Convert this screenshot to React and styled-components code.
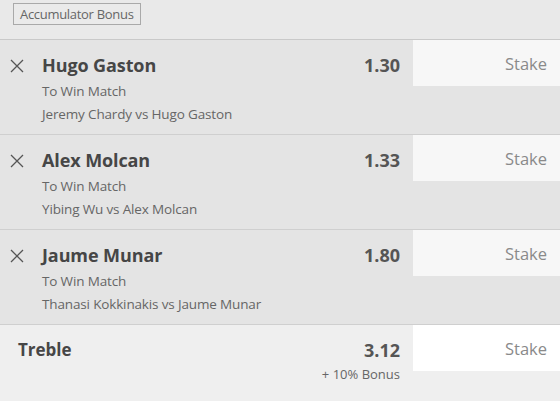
import styled, { createGlobalStyle } from 'styled-components';

const GlobalStyle = createGlobalStyle`
  body {
    margin: 0;
    background: #efefef;
    font-family: 'Open Sans', 'Noto Sans', sans-serif;
  }
`;

const Slip = styled.div`
  width: 560px;
  height: 401px;
  overflow: hidden;
  background: #efefef;
`;

const Header = styled.div`
  height: 40px;
  background: #e9e9e9;
  border-bottom: 1px solid #c9c9c9;
  padding: 3px 0 0 13px;
  box-sizing: border-box;
`;

const BonusTag = styled.button`
  display: block;
  height: 22px;
  padding: 0 6px;
  border: 1px solid #a9a9a9;
  background: #eaeaea;
  color: #666;
  font-family: inherit;
  font-size: 13px;
  letter-spacing: -0.3px;
  line-height: 20px;
  border-radius: 0;
`;

const BetRow = styled.div`
  display: flex;
  height: 94px;
  background: #e4e4e4;
  border-bottom: 1px solid #cfcfcf;
`;

const RemoveButton = styled.div`
  width: 42px;
  padding: 19px 9px 0 0;
  display: flex;
  justify-content: center;
  box-sizing: border-box;
`;

const Info = styled.div`
  flex: 1;
  padding-top: 12px;
`;

const Selection = styled.div`
  font-size: 18px;
  font-weight: 700;
  color: #464646;
  line-height: 26px;
  letter-spacing: -0.1px;
  margin-bottom: 2px;
`;

const Detail = styled.div`
  font-size: 13.5px;
  color: #666;
  line-height: 23px;
  letter-spacing: -0.15px;
`;

const Odds = styled.div`
  padding: 12px 13px 0 0;
  text-align: right;
  font-size: 18px;
  font-weight: 700;
  color: #555;
  line-height: 26px;
`;

const BonusNote = styled.div`
  font-size: 13px;
  font-weight: 400;
  color: #666;
  line-height: 20px;
  margin-top: 1px;
`;

const StakeBox = styled.div`
  width: 147px;
  height: 46px;
  box-sizing: border-box;
  background: ${(p) => (p.$white ? '#ffffff' : '#f7f7f7')};
  color: #8a8a8a;
  font-size: 16.5px;
  line-height: 24px;
  text-align: right;
  padding: 12px 13px 0 0;
`;

const TotalRow = styled.div`
  display: flex;
  height: 77px;
  background: #efefef;
`;

const TotalLabel = styled.div`
  flex: 1;
  padding: 12px 0 0 18px;
  font-size: 17px;
  font-weight: 700;
  color: #464646;
  line-height: 26px;
`;

function CloseIcon() {
  return (
    <svg width='14' height='14' viewBox='0 0 14 14'>
      <path d='M1 1 L13 13 M13 1 L1 13' stroke='#555' strokeWidth='1.3' fill='none' />
    </svg>
  );
}

const bets = [
  { name: 'Hugo Gaston', market: 'To Win Match', event: 'Jeremy Chardy vs Hugo Gaston', odds: '1.30' },
  { name: 'Alex Molcan', market: 'To Win Match', event: 'Yibing Wu vs Alex Molcan', odds: '1.33' },
  { name: 'Jaume Munar', market: 'To Win Match', event: 'Thanasi Kokkinakis vs Jaume Munar', odds: '1.80' },
];

export default function App() {
  return (
    <Slip>
      <GlobalStyle />
      <Header>
        <BonusTag>Accumulator Bonus</BonusTag>
      </Header>
      {bets.map((bet) => (
        <BetRow key={bet.name}>
          <RemoveButton>
            <CloseIcon />
          </RemoveButton>
          <Info>
            <Selection>{bet.name}</Selection>
            <Detail>{bet.market}</Detail>
            <Detail>{bet.event}</Detail>
          </Info>
          <Odds>{bet.odds}</Odds>
          <StakeBox>Stake</StakeBox>
        </BetRow>
      ))}
      <TotalRow>
        <TotalLabel>Treble</TotalLabel>
        <Odds>
          3.12
          <BonusNote>+ 10% Bonus</BonusNote>
        </Odds>
        <StakeBox $white>Stake</StakeBox>
      </TotalRow>
    </Slip>
  );
}
